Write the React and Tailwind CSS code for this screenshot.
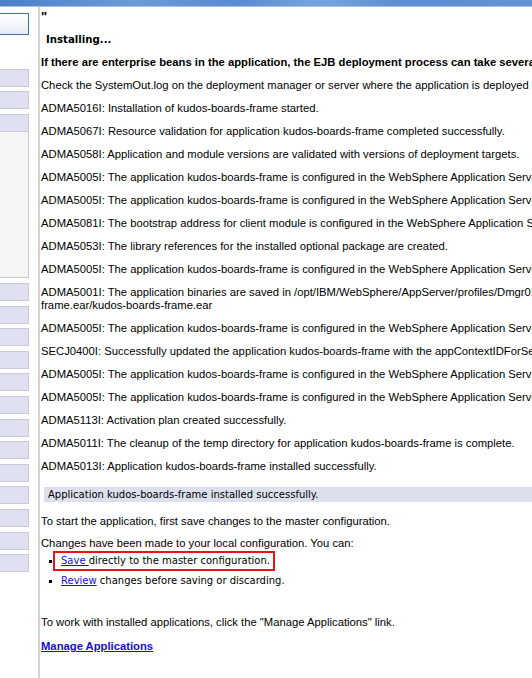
import React from "react";

const arial = { fontFamily: '"Liberation Sans", Arial, sans-serif' };

function SideBox({ mt = "mt-[4.6px]" }) {
  return (
    <div className={`${mt} h-[18px] w-[29px] border-y border-r border-[#c9cbd6] bg-[#dfe1f1]`} />
  );
}

function Line({ children, className = "" }) {
  return (
    <p className={`h-[13px] leading-[13px] mb-[10px] whitespace-nowrap ${className}`}>{children}</p>
  );
}

export default function App() {
  const msgs = [
    "ADMA5016I: Installation of kudos-boards-frame started.",
    "ADMA5067I: Resource validation for application kudos-boards-frame completed successfully.",
    "ADMA5058I: Application and module versions are validated with versions of deployment targets.",
    "ADMA5005I: The application kudos-boards-frame is configured in the WebSphere Application Server repository.",
    "ADMA5005I: The application kudos-boards-frame is configured in the WebSphere Application Server repository.",
    "ADMA5081I: The bootstrap address for client module is configured in the WebSphere Application Server repository.",
    "ADMA5053I: The library references for the installed optional package are created.",
    "ADMA5005I: The application kudos-boards-frame is configured in the WebSphere Application Server repository.",
  ];
  const msgs2 = [
    "ADMA5005I: The application kudos-boards-frame is configured in the WebSphere Application Server repository.",
    "SECJ0400I: Successfully updated the application kudos-boards-frame with the appContextIDForSecurity information.",
    "ADMA5005I: The application kudos-boards-frame is configured in the WebSphere Application Server repository.",
    "ADMA5005I: The application kudos-boards-frame is configured in the WebSphere Application Server repository.",
    "ADMA5113I: Activation plan created successfully.",
    "ADMA5011I: The cleanup of the temp directory for application kudos-boards-frame is complete.",
    "ADMA5013I: Application kudos-boards-frame installed successfully.",
  ];
  return (
    <div className="w-[532px] h-[678px] overflow-hidden bg-white flex flex-col">
      <div className="h-[7px] shrink-0 bg-[linear-gradient(90deg,#4a80c6_0%,#6d9ad8_25%,#5a8bd0_45%,#79a3dc_60%,#5f8dd2_75%,#6592d4_100%)] border-b border-[#a9c3e6]" />
      <div className="flex flex-1 min-h-0">
        <div className="w-[38px] shrink-0 flex flex-col">
          <div className="mt-[6px] h-[22px] w-[29px] border-y border-r border-[#3d6fb3] bg-[linear-gradient(180deg,#ffffff_0%,#f3f6fb_60%,#e4eaf4_100%)]" />
          <SideBox mt="mt-[34px]" />
          <SideBox mt="mt-[4px]" />
          <div className="mt-[5px] w-[29px] border-y border-r border-[#c9cbd6]">
            <div className="h-[17px] bg-[#dfe1f1] border-b border-[#c9cbd6]" />
            <div className="h-[145px] bg-[#f5f5f5]" />
          </div>
          <SideBox mt="mt-[5px]" />
          {Array.from({ length: 12 }).map((_, i) => (
            <SideBox key={i} />
          ))}
        </div>
        <div className="w-[2px] shrink-0 bg-[#d4d4d4]" />
        <div className="flex-1 min-w-0 pl-px pt-[3px] text-[11.25px] text-black" style={arial}>
          <Line className="text-[13px] font-bold">"</Line>
          <Line className="pl-[5px] font-bold text-[10.2px] [font-family:'DejaVu_Sans',Verdana,sans-serif]">Installing...</Line>
          <Line className="font-bold">
            If there are enterprise beans in the application, the EJB deployment process can take several minutes. Do not save the configuration until the process completes.
          </Line>
          <Line>
            Check the SystemOut.log on the deployment manager or server where the application is deployed for specific information about the EJB deployment process as it occurs.
          </Line>
          {msgs.map((m, i) => (
            <Line key={"a" + i}>{m}</Line>
          ))}
          <div className="leading-[13px] mb-[10px] whitespace-nowrap">
            <div className="h-[13px]">
              ADMA5001I: The application binaries are saved in /opt/IBM/WebSphere/AppServer/profiles/Dmgr01/wstemp/92668751/workspace/cells/Cell01/applications/kudos-boards-
            </div>
            <div className="h-[13px]">frame.ear/kudos-boards-frame.ear</div>
          </div>
          {msgs2.map((m, i) => (
            <Line key={"b" + i}>{m}</Line>
          ))}
          <div className="mt-[14px] ml-[3px] h-[15px] leading-[15px] pl-[4px] bg-[#dcdfec] whitespace-nowrap text-[10px] [font-family:'DejaVu_Sans',Verdana,sans-serif]">
            Application kudos-boards-frame installed successfully.
          </div>
          <p className="mt-[13px] h-[13px] leading-[13px] whitespace-nowrap">
            To start the application, first save changes to the master configuration.
          </p>
          <p className="mt-[9px] h-[13px] leading-[13px] whitespace-nowrap">
            Changes have been made to your local configuration. You can:
          </p>
          <ul className="mt-px text-[10px] [font-family:'DejaVu_Sans',Verdana,sans-serif]">
            <li className="flex items-center h-[20px]">
              <span className="ml-[8px] w-[3px] h-[3px] bg-black mt-[1px]" />
              <span className="ml-px h-[20px] border-2 border-[#e8141b] pl-[6px] pr-[3px] leading-[15px] whitespace-nowrap">
                <a href="#" className="text-[#1a0dd6] underline">Save </a>directly to the master configuration.
              </span>
            </li>
            <li className="flex items-center h-[13px] mt-[3px]">
              <span className="ml-[8px] w-[3px] h-[3px] bg-black mt-[1px]" />
              <span className="ml-[9px] leading-[13px] whitespace-nowrap">
                <a href="#" className="text-[#1a0dd6] underline">Review</a> changes before saving or discarding.
              </span>
            </li>
          </ul>
          <p className="mt-[29px] h-[13px] leading-[13px] whitespace-nowrap">
            To work with installed applications, click the "Manage Applications" link.
          </p>
          <p className="mt-[11px] h-[13px] leading-[13px] whitespace-nowrap">
            <a href="#" className="font-bold text-[#1a0dd6] underline">Manage Applications</a>
          </p>
        </div>
      </div>
    </div>
  );
}
